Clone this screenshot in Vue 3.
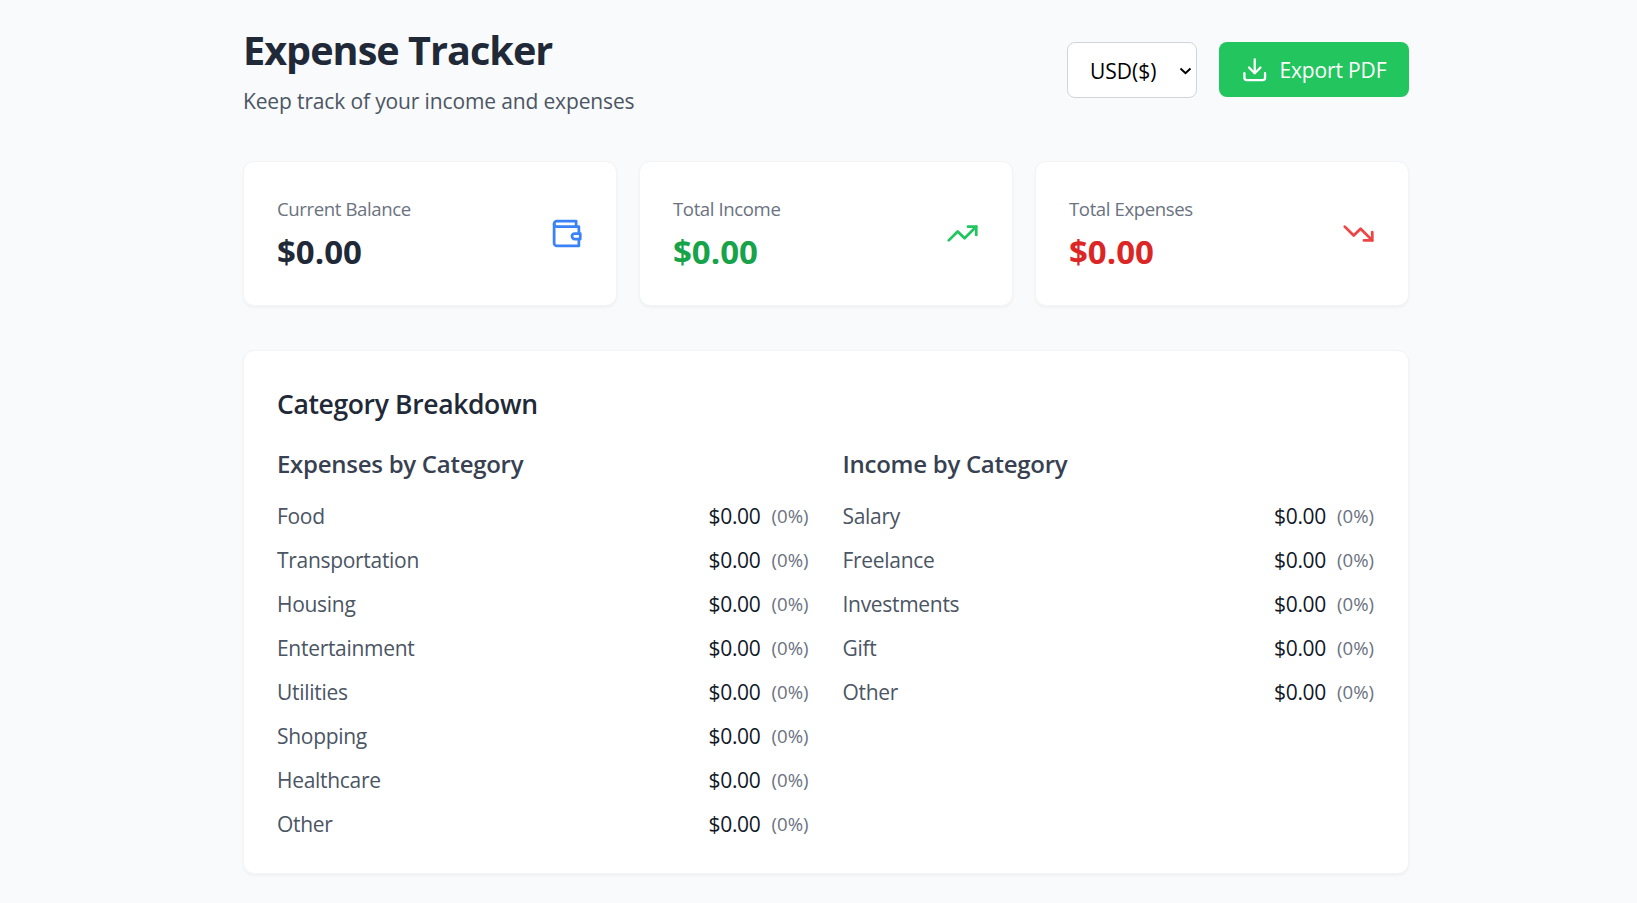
<script setup>
import { ref } from 'vue'

const currency = ref('USD')

const stats = [
  { label: 'Current Balance', tone: 'balance', paths: ['M21 12V7H5a2 2 0 0 1 0-4h14v4', 'M3 5v14a2 2 0 0 0 2 2h16v-5', 'M18 12a2 2 0 0 0 0 4h4v-4Z'] },
  { label: 'Total Income', tone: 'income', paths: ['M22 7 13.5 15.5 8.5 10.5 2 17', 'M16 7h6v6'] },
  { label: 'Total Expenses', tone: 'expense', paths: ['M22 17 13.5 8.5 8.5 13.5 2 7', 'M16 17h6v-6'] },
]

const groups = [
  { title: 'Expenses by Category', items: ['Food', 'Transportation', 'Housing', 'Entertainment', 'Utilities', 'Shopping', 'Healthcare', 'Other'] },
  { title: 'Income by Category', items: ['Salary', 'Freelance', 'Investments', 'Gift', 'Other'] },
]
</script>

<template>
  <main class="page">
    <header class="header">
      <div>
        <h1>Expense Tracker</h1>
        <p class="subtitle">Keep track of your income and expenses</p>
      </div>
      <div class="actions">
        <div class="select-wrap">
          <select v-model="currency" class="select">
            <option value="USD">USD($)</option>
          </select>
          <svg class="chevron" viewBox="0 0 12 8"><path d="M1 1.5 6 6.2 11 1.5" /></svg>
        </div>
        <button class="export">
          <svg class="icon download" viewBox="0 0 24 24">
            <path d="M21 15v4a2 2 0 0 1-2 2H5a2 2 0 0 1-2-2v-4" />
            <path d="m7 10 5 5 5-5" />
            <path d="M12 15V3" />
          </svg>
          <span>Export PDF</span>
        </button>
      </div>
    </header>

    <section class="stats">
      <article v-for="s in stats" :key="s.label" class="card stat" :class="s.tone">
        <div class="figures">
          <p class="label">{{ s.label }}</p>
          <p class="total">$0.00</p>
        </div>
        <svg class="icon stat-icon" viewBox="0 0 24 24">
          <path v-for="d in s.paths" :key="d" :d="d" />
        </svg>
      </article>
    </section>

    <section class="card breakdown">
      <h2>Category Breakdown</h2>
      <div class="groups">
        <div v-for="g in groups" :key="g.title">
          <h3>{{ g.title }}</h3>
          <ul>
            <li v-for="item in g.items" :key="item">
              <span class="name">{{ item }}</span>
              <span class="value"><span class="amount">$0.00</span><span class="percent">(0%)</span></span>
            </li>
          </ul>
        </div>
      </div>
    </section>
  </main>
</template>

<style>
html,
body {
  background: #f9fafb;
}
</style>

<style scoped>
.page {
  box-sizing: border-box;
  width: 1166px;
  min-height: 903px;
  margin-left: 243px;
  padding-top: 23px;
  font-family: 'Open Sans', 'Noto Sans', sans-serif;
  font-size: 21px;
  line-height: 33px;
  color: #111827;
}

h1,
h2,
h3,
p,
ul {
  margin: 0;
  padding: 0;
}

.header {
  display: flex;
  justify-content: space-between;
  align-items: flex-start;
  height: 94px;
  margin-bottom: 44px;
}

h1 {
  margin-bottom: 9px;
  padding-top: 2px;
  font-size: 39.6px;
  line-height: 51px;
  font-weight: 700;
  letter-spacing: -0.97px;
  color: #1f2937;
}

.subtitle {
  letter-spacing: -0.14px;
  color: #4b5563;
}

.actions {
  display: flex;
  gap: 22px;
  align-items: flex-start;
  padding-top: 19px;
}

.select-wrap {
  position: relative;
}

.select {
  display: block;
  box-sizing: border-box;
  width: 130px;
  height: 56px;
  padding: 2px 0 0 22px;
  appearance: none;
  border: 1px solid #d1d5db;
  border-radius: 8px;
  background: #fff;
  color: #000;
  font: inherit;
}

.chevron {
  position: absolute;
  right: 5px;
  top: 25px;
  width: 13px;
  height: 8px;
  fill: none;
  stroke: #000;
  stroke-width: 2;
}

.export {
  display: flex;
  align-items: center;
  gap: 11px;
  box-sizing: border-box;
  width: 190px;
  height: 55px;
  padding: 1px 22px 0;
  border: 0;
  border-radius: 8px;
  background: #22c55e;
  color: #fff;
  font: inherit;
  letter-spacing: -0.15px;
  white-space: nowrap;
}

.icon {
  flex: none;
  fill: none;
  stroke: currentColor;
  stroke-width: 2;
  stroke-linecap: round;
  stroke-linejoin: round;
}

.download {
  width: 27.5px;
  height: 27.5px;
}

.card {
  box-sizing: border-box;
  border: 1px solid #f3f4f6;
  border-radius: 11px;
  background: #fff;
  box-shadow: 0 1.4px 2.75px rgba(0, 0, 0, 0.04);
}

.stats {
  display: grid;
  grid-template-columns: repeat(3, 1fr);
  gap: 22px;
  margin-bottom: 44px;
}

.stat {
  display: flex;
  justify-content: space-between;
  align-items: center;
  height: 145px;
  padding: 0 33px;
}

.figures {
  height: 78px;
}

.label {
  margin-bottom: 7px;
  font-size: 18.6px;
  line-height: 27px;
  letter-spacing: -0.4px;
  color: #6b7280;
}

.total {
  font-size: 33px;
  line-height: 45px;
  font-weight: 700;
}

.stat-icon {
  width: 33px;
  height: 33px;
}

.balance .total { color: #1f2937; }
.balance .stat-icon { color: #3b82f6; }
.income .total { color: #16a34a; }
.income .stat-icon { color: #22c55e; }
.expense .total { color: #dc2626; }
.expense .stat-icon { color: #ef4444; }

.breakdown {
  height: 524px;
  padding: 34px 33px 0;
}

h2 {
  margin-bottom: 21px;
  font-size: 26.5px;
  line-height: 39px;
  font-weight: 600;
  letter-spacing: -0.36px;
  color: #1f2937;
}

h3 {
  margin-bottom: 17px;
  font-size: 24px;
  line-height: 38px;
  font-weight: 600;
  letter-spacing: -0.27px;
  color: #374151;
}

.groups {
  display: grid;
  grid-template-columns: 1fr 1fr;
  gap: 33px;
}

ul {
  display: grid;
  gap: 11px;
  list-style: none;
}

li {
  display: flex;
  justify-content: space-between;
  align-items: center;
}

.name {
  letter-spacing: -0.3px;
  color: #4b5563;
}

.value {
  display: flex;
  align-items: flex-start;
  gap: 11px;
  margin-right: 1px;
}

.amount {
  letter-spacing: -0.3px;
}

.percent {
  font-size: 18.6px;
  line-height: 32px;
  color: #6b7280;
}
</style>
